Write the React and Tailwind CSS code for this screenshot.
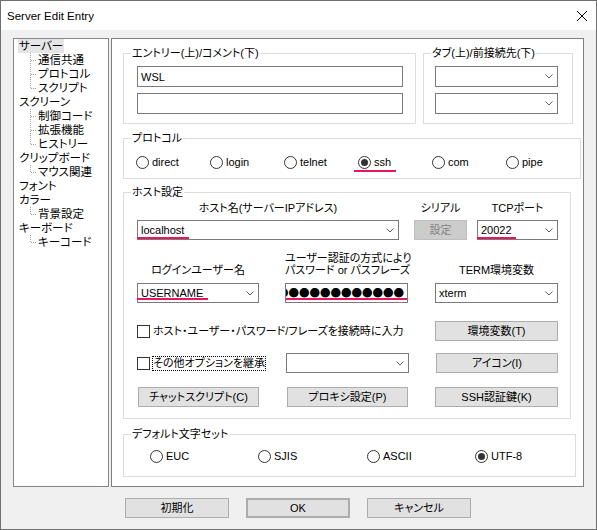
import React from 'react'

const tree = [
  ['サーバー', ['通信共通', 'プロトコル', 'スクリプト']],
  ['スクリーン', ['制御コード', '拡張機能', 'ヒストリー']],
  ['クリップボード', ['マウス関連']],
  ['フォント', []],
  ['カラー', ['背景設定']],
  ['キーボード', ['キーコード']],
]

function Chevron() {
  return (
    <svg width="8" height="5" viewBox="0 0 8 5" className="shrink-0">
      <path d="M0.5 0.5 L4 4 L7.5 0.5" fill="none" stroke="#606060" strokeWidth="1" />
    </svg>
  )
}

function Mark({ className }) {
  return <span className={'absolute h-[2px] bg-[#e8175d] ' + className} />
}

function Combo({ className = '', value = '', under }) {
  return (
    <div className={'relative flex h-[20px] items-center border border-[#7a7a7a] bg-white pl-[3px] pr-[4px] ' + className}>
      <span className="flex-1 whitespace-nowrap leading-[14px]">{value}</span>
      <Chevron />
      {under}
    </div>
  )
}

function Btn({ className = '', children }) {
  return (
    <div className={'flex h-[20px] items-center justify-center border border-[#adadad] bg-[#e1e1e1] leading-[14px] ' + className}>
      {children}
    </div>
  )
}

function Radio({ label, checked, className = '', under }) {
  return (
    <div className={'relative flex items-center ' + className}>
      <span className="flex h-[13px] w-[13px] items-center justify-center rounded-full border border-[#333] bg-white">
        {checked && <span className="h-[7px] w-[7px] rounded-full bg-[#333]" />}
      </span>
      <span className="ml-[3px] leading-[16px]">{label}</span>
      {under}
    </div>
  )
}

function Check({ children }) {
  return (
    <div className="flex items-center whitespace-nowrap">
      <span className="h-[13px] w-[13px] shrink-0 border border-[#333] bg-white" />
      {children}
    </div>
  )
}

function Group({ title, className = '', children }) {
  return (
    <fieldset className={'border border-[#dcdcdc] ' + className}>
      <legend className="ml-[7px] px-[1px] leading-[16px]">{title}</legend>
      {children}
    </fieldset>
  )
}

function TreeLine({ last }) {
  return (
    <svg width="8" height="14" viewBox="0 0 8 14" className="shrink-0">
      <path d={last ? 'M0.5 0 V7.5' : 'M0.5 0 V14'} stroke="#a0a0a0" strokeDasharray="1 1" fill="none" />
      <path d="M1 7.5 H7" stroke="#a0a0a0" strokeDasharray="1 1" fill="none" />
    </svg>
  )
}

export default function App() {
  return (
    <div className="flex h-[530px] w-[597px] flex-col overflow-hidden border border-[#6f6f6f] bg-[#f0f0f0] font-['Liberation_Sans','Noto_Sans_CJK_JP',sans-serif] text-[11px] text-black [font-feature-settings:'palt']">
      {/* Title bar */}
      <div className="flex h-[29px] shrink-0 items-center justify-between bg-white pl-[6px] pr-[9px]">
        <span className="text-[11.5px] leading-[16px]">Server Edit Entry</span>
        <svg width="10" height="10" viewBox="0 0 10 10">
          <path d="M0 0 L10 10 M10 0 L0 10" stroke="#000" strokeWidth="1" />
        </svg>
      </div>

      <div className="flex flex-1 flex-col pt-[8px]">
        <div className="flex h-[449px] pl-[12px]">
          {/* Tree */}
          <div className="w-[96px] border border-[#828790] bg-white text-[11.5px]">
            {tree.map(([name, kids], i) => (
              <div key={name}>
                <div className="flex h-[14px] items-center pl-[4px] leading-[14px]">
                  <span className={i === 0 ? 'bg-[#e5e5e5] px-[1px]' : 'px-[1px]'}>{name}</span>
                </div>
                {kids.map((k, j) => (
                  <div key={k} className="flex h-[14px] items-center pl-[16px] leading-[14px]">
                    <TreeLine last={j === kids.length - 1} />
                    <span>{k}</span>
                  </div>
                ))}
              </div>
            ))}
          </div>

          {/* Settings page */}
          <div className="ml-[2px] w-[473px] border border-[#808080] bg-white">
            <div className="mt-[6px] flex">
              <Group title="エントリー(上)/コメント(下)" className="ml-[11px] w-[293px] pb-[9px]">
                <div className="pl-[13px] pt-[5px]">
                  <div className="flex h-[21px] w-[266px] items-center border border-[#7a7a7a] bg-white pl-[3px] leading-[14px]">WSL</div>
                  <div className="mt-[6px] h-[21px] w-[266px] border border-[#7a7a7a] bg-white" />
                </div>
              </Group>
              <Group title="タブ(上)/前接続先(下)" className="ml-[7px] w-[150px] pb-[9px]">
                <div className="pl-[11px] pt-[5px]">
                  <Combo className="h-[21px] w-[123px]" />
                  <Combo className="mt-[6px] h-[21px] w-[123px]" />
                </div>
              </Group>
            </div>

            <Group title="プロトコル" className="ml-[11px] mt-[6px] w-[448px] pb-[8px]">
              <div className="mt-[8px] flex h-[16px] pl-[12px]">
                <Radio label="direct" className="w-[74px]" />
                <Radio label="login" className="w-[74px]" />
                <Radio label="telnet" className="w-[74px]" />
                <Radio label="ssh" checked className="w-[74px]" under={<Mark className="-left-[4px] top-[16px] w-[42px]" />} />
                <Radio label="com" className="w-[74px]" />
                <Radio label="pipe" className="w-[74px]" />
              </div>
            </Group>

            <Group title="ホスト設定" className="ml-[11px] mt-[5px] w-[448px] pb-[11px]">
              <div className="flex items-end pl-[13px]">
                <div className="flex w-[262px] flex-col items-center">
                  <span className="whitespace-nowrap leading-[16px]">ホスト名(サーバーIPアドレス)</span>
                  <Combo className="mt-[4px] w-full" value="localhost" under={<Mark className="-left-px top-[16px] w-[52px]" />} />
                </div>
                <div className="ml-[15px] flex w-[53px] flex-col items-center">
                  <span className="leading-[16px]">シリアル</span>
                  <div className="mt-[4px] flex h-[20px] w-full items-center justify-center border border-[#bfbfbf] bg-[#cccccc] leading-[14px] text-[#838383]">設定</div>
                </div>
                <div className="ml-[10px] flex w-[81px] flex-col items-center">
                  <span className="leading-[16px]">TCPポート</span>
                  <Combo className="mt-[4px] w-full" value="20022" under={<Mark className="-left-px top-[16px] w-[39px]" />} />
                </div>
              </div>

              <div className="mt-[12px] flex items-end pl-[13px] leading-[12px]">
                <span className="w-[122px] text-center">ログインユーザー名</span>
                <span className="ml-[26px] w-[123px] whitespace-nowrap text-center">
                  ユーザー認証の方式により<br />パスワード or パスフレーズ
                </span>
                <span className="ml-[27px] w-[123px] text-center">TERM環境変数</span>
              </div>
              <div className="mt-[7px] flex pl-[13px]">
                <Combo className="w-[122px]" value="USERNAME" under={<Mark className="-left-px top-[14px] w-[71px]" />} />
                <div className="relative ml-[26px] flex h-[20px] w-[123px] items-center justify-end overflow-hidden border border-[#7a7a7a] bg-white pr-[3px]">
                  <span className="whitespace-nowrap font-['Noto_Sans_CJK_JP'] text-[10.5px] leading-[12px]">●●●●●●●●●●●●</span>
                  <Mark className="-left-px -right-px top-[14px]" />
                </div>
                <Combo className="ml-[27px] w-[123px]" value="xterm" />
              </div>

              <div className="mt-[18px] flex items-center pl-[13px]">
                <div className="w-[271px]">
                  <Check>
                    <span className="ml-[3px] leading-[14px]">ホスト・ユーザー・パスワード/フレーズを接続時に入力</span>
                  </Check>
                </div>
                <Btn className="ml-[27px] w-[123px]">環境変数(T)</Btn>
              </div>

              <div className="mt-[12px] flex items-center pl-[13px]">
                <div className="w-[122px]">
                  <Check>
                    <span className="ml-[2px] border border-dotted border-black leading-[13px]">その他オプションを継承</span>
                  </Check>
                </div>
                <Combo className="ml-[27px] w-[123px]" />
                <Btn className="ml-[27px] w-[122px]">アイコン(I)</Btn>
              </div>

              <div className="mt-[14px] flex items-center pl-[14px]">
                <Btn className="w-[121px]">チャットスクリプト(C)</Btn>
                <Btn className="ml-[28px] w-[121px]">プロキシ設定(P)</Btn>
                <Btn className="ml-[27px] w-[123px]">SSH認証鍵(K)</Btn>
              </div>
            </Group>

            <Group title="デフォルト文字セット" className="ml-[11px] mt-[7px] w-[448px] pb-[12px]">
              <div className="mt-[6px] flex h-[16px] pl-[26px]">
                <Radio label="EUC" className="w-[108px]" />
                <Radio label="SJIS" className="w-[109px]" />
                <Radio label="ASCII" className="w-[108px]" />
                <Radio label="UTF-8" checked className="w-[100px]" />
              </div>
            </Group>
          </div>
        </div>

        {/* Dialog buttons */}
        <div className="mt-[11px] flex gap-[17px] pl-[124px]">
          <Btn className="w-[104px]">初期化</Btn>
          <Btn className="w-[104px] border-2 border-[#0078d7]">OK</Btn>
          <Btn className="w-[104px]">キャンセル</Btn>
        </div>
      </div>
    </div>
  )
}
